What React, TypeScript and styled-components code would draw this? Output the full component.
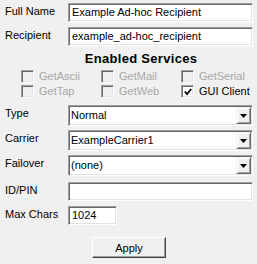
import React from 'react';
import styled, { createGlobalStyle, css } from 'styled-components';

const GlobalStyle = createGlobalStyle`
  html, body {
    margin: 0;
    padding: 0;
    background: #f0f0f0;
  }
  body {
    font-family: "Liberation Sans", Arial, sans-serif;
    font-size: 11px;
    color: #000;
  }
`;

const sunken = css`
  border-style: solid;
  border-width: 1px;
  border-color: #a0a0a0 #ffffff #ffffff #a0a0a0;
  box-shadow: inset 1px 1px 0 #696969, inset -1px -1px 0 #e3e3e3;
`;

const Form = styled.div`
  display: flex;
  flex-direction: column;
  width: 248px;
  padding: 3px 4px 6px 5px;
`;

const Row = styled.div<{ $top?: number }>`
  display: grid;
  grid-template-columns: 63px 185px;
  align-items: start;
  margin-top: ${(p) => p.$top ?? 0}px;
`;

const Label = styled.label`
  padding-top: 2px;
  line-height: 13px;
  white-space: nowrap;
`;

const TextBox = styled.div<{ $width?: number }>`
  ${sunken};
  box-sizing: border-box;
  height: 19px;
  width: ${(p) => (p.$width ? `${p.$width}px` : '100%')};
  background: #fff;
  padding: 0 3px;
  display: flex;
  align-items: center;
  line-height: 13px;
  white-space: nowrap;
  overflow: hidden;
`;

const Combo = styled.div`
  ${sunken};
  box-sizing: border-box;
  height: 21px;
  background: #fff;
  display: flex;
  align-items: stretch;
`;

const ComboText = styled.div`
  flex: 1;
  display: flex;
  align-items: center;
  padding-left: 2px;
  line-height: 13px;
`;

const ComboButton = styled.div`
  width: 15px;
  margin: 1px;
  box-sizing: border-box;
  background: #f0f0f0;
  border-style: solid;
  border-width: 1px;
  border-color: #f0f0f0 #696969 #696969 #f0f0f0;
  box-shadow: inset 1px 1px 0 #ffffff, inset -1px -1px 0 #a0a0a0;
  display: flex;
  align-items: center;
  justify-content: center;
`;

const Heading = styled.div`
  margin-top: 5px;
  padding-left: 24px;
  text-align: center;
  font-weight: bold;
  font-size: 13px;
  letter-spacing: 0.3px;
  line-height: 15px;
`;

const Services = styled.div`
  display: grid;
  grid-template-columns: repeat(3, 80px);
  row-gap: 2px;
  margin-top: 4px;
  padding-left: 16px;
`;

const Service = styled.div<{ $disabled?: boolean }>`
  display: flex;
  align-items: center;
  gap: 5px;
  height: 13px;
  line-height: 13px;
  color: ${(p) => (p.$disabled ? '#a6a6a6' : '#000')};
`;

const Box = styled.div<{ $disabled?: boolean }>`
  ${sunken};
  box-sizing: border-box;
  width: 13px;
  height: 13px;
  background: ${(p) => (p.$disabled ? '#f0f0f0' : '#fff')};
  display: flex;
  align-items: center;
  justify-content: center;
`;

const Footer = styled.div`
  display: flex;
  justify-content: center;
  margin-top: 12px;
`;

const Button = styled.button`
  font: inherit;
  color: #000;
  width: 74px;
  height: 21px;
  padding: 0;
  background: #f0f0f0;
  border-style: solid;
  border-width: 1px;
  border-color: #ffffff #404040 #404040 #ffffff;
  box-shadow: inset -1px -1px 0 #a0a0a0, inset 1px 1px 0 #f0f0f0;
`;

const Arrow = () => (
  <svg width="7" height="4" viewBox="0 0 7 4">
    <polygon points="0,0 7,0 3.5,4" fill="#000" />
  </svg>
);

const Check = () => (
  <svg width="8" height="8" viewBox="0 0 8 8">
    <polyline points="0.8,3.5 3,6 7.2,1" fill="none" stroke="#000" strokeWidth="1.8" />
  </svg>
);

const services = [
  { name: 'GetAscii', on: false, disabled: true },
  { name: 'GetMail', on: false, disabled: true },
  { name: 'GetSerial', on: false, disabled: true },
  { name: 'GetTap', on: false, disabled: true },
  { name: 'GetWeb', on: false, disabled: true },
  { name: 'GUI Client', on: true, disabled: false },
];

const App: React.FC = () => (
  <>
    <GlobalStyle />
    <Form>
      <Row>
        <Label>Full Name</Label>
        <TextBox>Example Ad-hoc Recipient</TextBox>
      </Row>
      <Row $top={5}>
        <Label>Recipient</Label>
        <TextBox>example_ad-hoc_recipient</TextBox>
      </Row>

      <Heading>Enabled Services</Heading>
      <Services>
        {services.map((s) => (
          <Service key={s.name} $disabled={s.disabled}>
            <Box $disabled={s.disabled}>{s.on && <Check />}</Box>
            {s.name}
          </Service>
        ))}
      </Services>

      <Row $top={7}>
        <Label>Type</Label>
        <Combo>
          <ComboText>Normal</ComboText>
          <ComboButton><Arrow /></ComboButton>
        </Combo>
      </Row>
      <Row $top={4}>
        <Label>Carrier</Label>
        <Combo>
          <ComboText>ExampleCarrier1</ComboText>
          <ComboButton><Arrow /></ComboButton>
        </Combo>
      </Row>
      <Row $top={4}>
        <Label>Failover</Label>
        <Combo>
          <ComboText>(none)</ComboText>
          <ComboButton><Arrow /></ComboButton>
        </Combo>
      </Row>
      <Row $top={6}>
        <Label>ID/PIN</Label>
        <TextBox />
      </Row>
      <Row $top={5}>
        <Label>Max Chars</Label>
        <TextBox $width={49}>1024</TextBox>
      </Row>

      <Footer>
        <Button>Apply</Button>
      </Footer>
    </Form>
  </>
);

export default App;
